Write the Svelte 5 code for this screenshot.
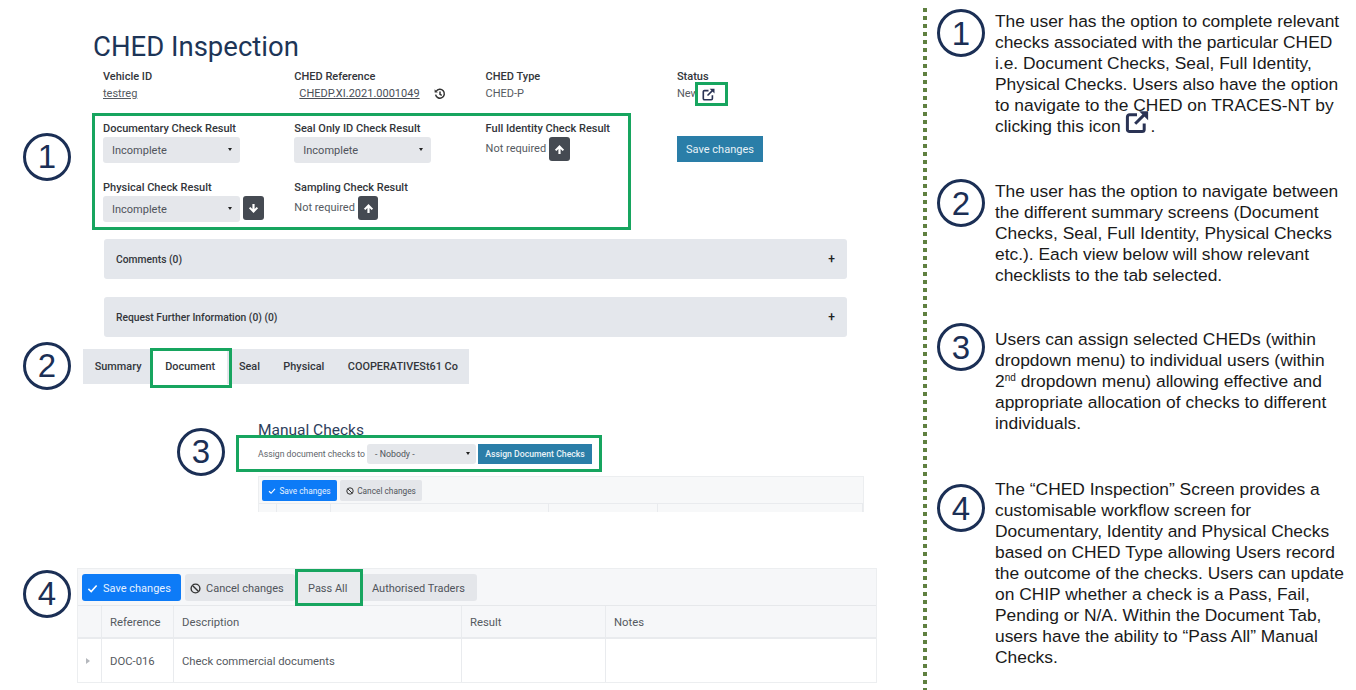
<script>
  // CHED Inspection help slide: annotated app screenshots on the left,
  // numbered explanations on the right.
  const meta = [
    { label: 'Vehicle ID', value: 'testreg', kind: 'link' },
    { label: 'CHED Reference', value: 'CHEDP.XI.2021.0001049', kind: 'ref' },
    { label: 'CHED Type', value: 'CHED-P', kind: 'text' },
    { label: 'Status', value: 'New', kind: 'status' }
  ];
  const tabs = ['Summary', 'Document', 'Seal', 'Physical', 'COOPERATIVESt61 Co'];
</script>

{#snippet badge(n, cls)}
  <div class="badge {cls}">{n}</div>
{/snippet}

{#snippet extIcon(size)}
  <svg width={size} height={size} viewBox="0 0 16 16" fill="none" stroke="#2a3354" stroke-width="2">
    <path d="M8 3.2H3a1.4 1.4 0 0 0-1.4 1.4v8.4A1.4 1.4 0 0 0 3 14.4h8.4a1.4 1.4 0 0 0 1.4-1.4V9" />
    <path d="M6.8 9.2 13.4 2.6" />
    <path d="M9.4 .8h6v6z" fill="#2a3354" stroke="none" />
  </svg>
{/snippet}

{#snippet arrow(dir)}
  <svg width="11" height="11" viewBox="0 0 12 12" class:down={dir === 'down'}>
    <path d="M6 1 11 6.2 9.4 7.7 7.2 5.5V11H4.8V5.5L2.6 7.7 1 6.2z" fill="#fff" />
  </svg>
{/snippet}

{#snippet check(size)}
  <svg width={size} height={size} viewBox="0 0 12 12" fill="none" stroke="#fff" stroke-width="1.7">
    <path d="M1.5 6.4 4.6 9.4 10.5 2.8" />
  </svg>
{/snippet}

{#snippet ban(size)}
  <svg width={size} height={size} viewBox="0 0 12 12" fill="none" stroke="#333" stroke-width="1.5">
    <circle cx="6" cy="6" r="4.8" />
    <path d="M2.7 2.7 9.3 9.3" />
  </svg>
{/snippet}

<div class="slide">
  <main class="shots">
    <h1>CHED Inspection</h1>

    <div class="meta">
      {#each meta as m}
        <div>
          <div class="label">{m.label}</div>
          {#if m.kind === 'link'}
            <a class="val" href="#top">{m.value}</a>
          {:else if m.kind === 'ref'}
            <div class="val ref">
              <a href="#top">{m.value}</a>
              <svg width="12" height="12" viewBox="0 0 12 12" fill="none" stroke="#333" stroke-width="1.5">
                <path d="M2.2 3.4A4.4 4.4 0 1 1 1.6 6.6" />
                <path d="M.6 1.2v3.2h3.2z" fill="#333" stroke="none" />
                <path d="M6 3.6v2.7l1.8 1" />
              </svg>
            </div>
          {:else if m.kind === 'status'}
            <div class="val status">
              {m.value}
              <span class="icon-box">{@render extIcon(13)}</span>
            </div>
          {:else}
            <div class="val">{m.value}</div>
          {/if}
        </div>
      {/each}
    </div>

    <div class="form-row">
      {@render badge(1, 'b-form')}
      <div class="form-box">
        <div class="field">
          <div class="label">Documentary Check Result</div>
          <div class="select">Incomplete</div>
        </div>
        <div class="field">
          <div class="label">Seal Only ID Check Result</div>
          <div class="select">Incomplete</div>
        </div>
        <div class="field">
          <div class="label">Full Identity Check Result</div>
          <div class="plain">Not required<span class="arrow-btn">{@render arrow('up')}</span></div>
        </div>
        <div class="field">
          <div class="label">Physical Check Result</div>
          <div class="with-btn">
            <div class="select">Incomplete</div>
            <span class="arrow-btn">{@render arrow('down')}</span>
          </div>
        </div>
        <div class="field">
          <div class="label">Sampling Check Result</div>
          <div class="plain">Not required<span class="arrow-btn">{@render arrow('up')}</span></div>
        </div>
      </div>
      <button type="button" class="save-main">Save changes</button>
    </div>

    <div class="accordion first"><span>Comments (0)</span><span class="plus">+</span></div>
    <div class="accordion second"><span>Request Further Information (0) (0)</span><span class="plus">+</span></div>

    <nav class="tabs">
      {@render badge(2, 'b-tabs')}
      {#each tabs as t}
        <span class="tab" class:active={t === 'Document'}>{t}</span>
      {/each}
    </nav>

    <h2>Manual Checks</h2>
    <div class="assign">
      {@render badge(3, 'b-assign')}
      <span>Assign document checks to</span>
      <div class="select small">- Nobody -</div>
      <button type="button" class="assign-btn">Assign Document Checks</button>
    </div>

    <div class="mini">
      <div class="mini-bar">
        <button type="button" class="m-btn m-save">{@render check(8)} Save changes</button>
        <button type="button" class="m-btn">{@render ban(8)} Cancel changes</button>
      </div>
      <div class="mini-cols"><i></i><i></i><i></i><i></i><i></i></div>
    </div>

    <div class="grid-card">
      {@render badge(4, 'b-grid')}
      <div class="grid-bar">
        <button type="button" class="g-btn g-save">{@render check(11)} Save changes</button>
        <button type="button" class="g-btn g-cancel">{@render ban(11)} Cancel changes</button>
        <button type="button" class="g-btn pass">Pass All</button>
        <button type="button" class="g-btn traders">Authorised Traders</button>
      </div>
      <div class="g-row g-head">
        <div></div><div>Reference</div><div>Description</div><div>Result</div><div>Notes</div>
      </div>
      <div class="g-row g-body">
        <div class="caret"><span></span></div><div>DOC-016</div><div>Check commercial documents</div><div></div><div></div>
      </div>
    </div>
  </main>

  <div class="divider"></div>

  <aside class="notes">
    <section class="note n1">
      {@render badge(1, '')}
      <p>The user has the option to complete relevant checks associated with the particular CHED i.e. Document Checks, Seal, Full Identity, Physical Checks. Users also have the option to navigate to the CHED on TRACES-NT by clicking this icon <span class="inline-icon">{@render extIcon(24)}</span>.</p>
    </section>
    <section class="note n2">
      {@render badge(2, '')}
      <p>The user has the option to navigate between the different summary screens (Document Checks, Seal, Full Identity, Physical Checks etc.). Each view below will show relevant checklists to the tab selected.</p>
    </section>
    <section class="note n3">
      {@render badge(3, '')}
      <p>Users can assign selected CHEDs (within dropdown menu) to individual users (within 2<sup>nd</sup> dropdown menu) allowing effective and appropriate allocation of checks to different individuals.</p>
    </section>
    <section class="note n4">
      {@render badge(4, '')}
      <p>The “CHED Inspection” Screen provides a customisable workflow screen for Documentary, Identity and Physical Checks based on CHED Type allowing Users record the outcome of the checks. Users can update on CHIP whether a check is a Pass, Fail, Pending or N/A. Within the Document Tab, users have the ability to “Pass All” Manual Checks.</p>
    </section>
  </aside>
</div>

<style>
  :global(body) {
    background: #fff;
    overflow: hidden;
  }

  .slide {
    display: flex;
    width: 1356px;
    height: 690px;
    overflow: hidden;
    font-family: Roboto, sans-serif;
    color: #3f434a;
  }

  button {
    border: 0;
    font-family: inherit;
    padding: 0;
  }

  .shots {
    position: relative;
    width: 923px;
    flex-shrink: 0;
  }

  h1 {
    margin: 31px 0 0 93px;
    font-size: 27.5px;
    line-height: 32px;
    font-weight: 400;
    color: #1d3557;
  }

  h2 {
    margin: 37px 0 0 258px;
    font-size: 15.5px;
    line-height: 18px;
    font-weight: 400;
    color: #2d3e5c;
  }

  .label {
    font-size: 11px;
    line-height: 13px;
    font-weight: 500;
    color: #33363b;
  }

  .meta {
    display: grid;
    grid-template-columns: repeat(4, 191.3px);
    margin: 7px 0 0 103px;
    height: 43px;
  }

  .val {
    display: block;
    margin-top: 4px;
    font-size: 11px;
    line-height: 13px;
    color: #555a61;
  }

  a {
    color: #4a4f57;
    text-decoration: underline;
  }

  .ref {
    display: flex;
    align-items: center;
    gap: 14px;
    padding-left: 5px;
  }

  .status {
    position: relative;
  }

  .icon-box {
    position: absolute;
    left: 18px;
    top: -5px;
    width: 27px;
    height: 18px;
    border: 3px solid #17a55f;
    background: #fff;
    display: flex;
    align-items: center;
    justify-content: center;
  }

  .icon-box svg {
    margin-right: 5px;
  }

  .form-row {
    position: relative;
    display: flex;
    align-items: flex-start;
    margin: 0 0 0 92px;
  }

  .form-box {
    box-sizing: border-box;
    width: 539px;
    height: 117px;
    border: 3px solid #17a55f;
    padding: 6px 0 0 8px;
    display: grid;
    grid-template-columns: repeat(3, 191.3px);
    grid-auto-rows: 59px;
  }

  .field .label {
    line-height: 14px;
  }

  .select {
    box-sizing: border-box;
    position: relative;
    width: 137px;
    height: 26px;
    margin-top: 1px;
    padding-left: 9px;
    background: #e5e7eb;
    border-radius: 3px;
    font-size: 11px;
    line-height: 28px;
    color: #50545b;
  }

  .select::after {
    content: '';
    position: absolute;
    right: 8px;
    top: 11px;
    border: 2.5px solid transparent;
    border-top: 3.5px solid #222;
    border-bottom: 0;
  }

  .with-btn {
    display: flex;
    align-items: flex-start;
    gap: 3px;
  }

  .with-btn .arrow-btn {
    margin-top: 1px;
  }

  .plain {
    display: flex;
    align-items: flex-start;
    gap: 3px;
    margin-top: 1px;
    font-size: 11px;
    line-height: 23px;
    color: #555a61;
  }

  .arrow-btn {
    display: inline-flex;
    align-items: center;
    justify-content: center;
    width: 20.5px;
    height: 24px;
    background: #454a52;
    border-radius: 3px;
  }

  .down {
    transform: rotate(180deg);
  }

  .save-main {
    width: 86px;
    height: 26px;
    margin: 23px 0 0 46px;
    background: #2a7ea8;
    color: #e8f2f7;
    font-size: 11px;
  }

  .accordion {
    box-sizing: border-box;
    display: flex;
    justify-content: space-between;
    align-items: center;
    width: 743px;
    height: 40px;
    margin-left: 104px;
    padding: 0 12px;
    background: #e4e7ec;
    border-radius: 3px;
    font-size: 10.3px;
    font-weight: 500;
    color: #33363b;
  }

  .accordion.first {
    margin-top: 9px;
  }

  .accordion.second {
    margin-top: 18px;
  }

  .plus {
    font-size: 12px;
    color: #222;
  }

  .tabs {
    position: relative;
    display: flex;
    align-items: stretch;
    width: 386px;
    height: 35px;
    margin: 12px 0 0 83px;
    background: #e4e7ec;
    font-size: 10.9px;
    font-weight: 500;
    color: #33363b;
    white-space: nowrap;
  }

  .tab {
    display: flex;
    align-items: center;
    padding: 0 11.7px;
  }

  .tab.active {
    position: relative;
    background: #fff;
    padding: 0 12px;
  }

  /* green highlight drawn over the active tab, runs past the bar's bottom */
  .tab.active::after {
    content: '';
    position: absolute;
    left: -3px;
    right: -5px;
    top: -1px;
    bottom: -4px;
    border: 3px solid #17a55f;
  }

  .assign {
    position: relative;
    box-sizing: border-box;
    display: flex;
    align-items: center;
    width: 366px;
    height: 37px;
    margin: -4px 0 0 236px;
    padding-left: 19px;
    border: 3px solid #17a55f;
    font-size: 8.7px;
    color: #60646b;
  }

  .select.small {
    width: 109px;
    height: 20px;
    margin: 0 2px 0 2px;
    padding-left: 8px;
    font-size: 8.8px;
    line-height: 20px;
  }

  .select.small::after {
    top: 8px;
    right: 6px;
  }

  .assign-btn {
    width: 114px;
    height: 20px;
    background: #2a7ea8;
    color: #e8f2f7;
    font-size: 8.7px;
    font-weight: 500;
  }

  .mini {
    box-sizing: border-box;
    width: 606px;
    height: 36px;
    margin: 4px 0 0 258px;
    background: #f7f8f9;
    border: 1px solid #eceef0;
    border-bottom: 0;
  }

  .mini-bar {
    display: flex;
    gap: 3px;
    height: 27px;
    padding: 3px 0 0 3px;
    box-sizing: border-box;
    border-bottom: 1px solid #e9ebee;
  }

  .m-btn {
    display: flex;
    align-items: center;
    justify-content: center;
    gap: 3px;
    height: 21px;
    width: 82px;
    background: #e4e6ea;
    border-radius: 2px;
    font-size: 8.3px;
    color: #50545b;
  }

  .m-save {
    width: 75px;
    background: #0d7bf7;
    color: #e6f1fe;
  }

  .mini-cols {
    display: grid;
    grid-template-columns: 18px 54px 218px 109px 1fr;
    height: 8px;
  }

  .mini-cols i {
    border-right: 1px solid #e9ebee;
  }

  .grid-card {
    position: relative;
    box-sizing: border-box;
    width: 800px;
    margin: 56px 0 0 77px;
    border: 1px solid #eceef0;
    font-size: 11.3px;
    color: #555a61;
  }

  .grid-bar {
    display: flex;
    height: 37px;
    box-sizing: border-box;
    padding-top: 5px;
    padding-left: 4px;
    background: #f6f7f9;
    border-bottom: 1px solid #e6e8eb;
  }

  .g-btn {
    box-sizing: border-box;
    display: flex;
    align-items: center;
    gap: 5px;
    height: 27px;
    padding: 1px 0 0 5px;
    background: #e4e6ea;
    border-radius: 3px;
    font-size: 11px;
    color: #50545b;
  }

  .g-save {
    width: 99px;
    background: #0d7bf7;
    color: #e6f1fe;
    margin-right: 4px;
  }

  .g-cancel {
    width: 110px;
  }

  .pass {
    position: relative;
    width: 68px;
    height: 37px;
    margin-top: -5px;
    padding-left: 10px;
    border: 3px solid #17a55f;
    border-radius: 0;
    background: #e9ebee;
  }

  .traders {
    width: 114px;
    padding-left: 9px;
    border-radius: 0 3px 3px 0;
  }

  .g-row {
    display: grid;
    grid-template-columns: 24px 72px 288px 144px 1fr;
  }

  .g-row > div {
    display: flex;
    align-items: center;
    padding-left: 8px;
    border-right: 1px solid #e9ebee;
  }

  .g-row > div:last-child {
    border-right: 0;
  }

  .g-head {
    height: 33px;
    background: #f6f7f9;
    border-bottom: 2px solid #e9ebee;
    box-sizing: border-box;
  }

  .g-head > div {
    padding-top: 2px;
  }

  .g-body {
    height: 43px;
  }

  .g-body > div {
    padding-top: 1px;
  }

  .caret span {
    border: 3px solid transparent;
    border-left: 4px solid #b5b8bd;
    border-right: 0;
  }

  /* Call-out numbers sit on the slide canvas beside the pasted screenshots */
  .badge {
    box-sizing: border-box;
    flex-shrink: 0;
    width: 48px;
    height: 48px;
    border: 3px solid #1b2f55;
    border-radius: 50%;
    display: flex;
    align-items: center;
    justify-content: center;
    font-family: 'Liberation Sans', sans-serif;
    font-size: 33px;
    font-weight: 400;
    color: #1b2f55;
    background: #fff;
  }

  .b-form {
    position: absolute;
    left: -69px;
    top: 20px;
  }

  .b-tabs {
    position: absolute;
    left: -60px;
    top: -7px;
  }

  .b-assign {
    position: absolute;
    left: -62px;
    top: -10px;
  }

  .b-grid {
    position: absolute;
    left: -55px;
    top: 1px;
  }

  .divider {
    width: 4px;
    height: 682px;
    margin-top: 8px;
    flex-shrink: 0;
    background: repeating-linear-gradient(to bottom, #5f8040 0 4px, transparent 4px 8px);
  }

  .notes {
    flex: 1;
    font-family: 'Liberation Sans', Arial, sans-serif;
    font-size: 17.4px;
    line-height: 21px;
    color: #1a1a1a;
  }

  .note {
    display: flex;
    gap: 10px;
    padding-left: 10px;
  }

  .note p {
    margin: 0;
    width: 353px;
  }

  .n1 {
    padding-top: 9px;
    height: 179px;
    box-sizing: border-box;
  }

  .n1 p {
    margin-top: 2px;
  }

  .n2 {
    height: 144px;
    box-sizing: border-box;
  }

  .n2 p {
    margin-top: 2px;
  }

  .n3 {
    height: 161px;
    box-sizing: border-box;
  }

  .n3 p {
    margin-top: 6px;
  }

  .n4 p {
    margin-top: -5px;
  }

  /* icon is taller than the text line, so it must not push the line down */
  .inline-icon {
    position: relative;
    display: inline-block;
    width: 25px;
    height: 0;
  }

  .inline-icon svg {
    position: absolute;
    left: 0;
    bottom: -2px;
  }

  sup {
    font-size: 10px;
    line-height: 0;
    vertical-align: 6px;
  }
</style>
